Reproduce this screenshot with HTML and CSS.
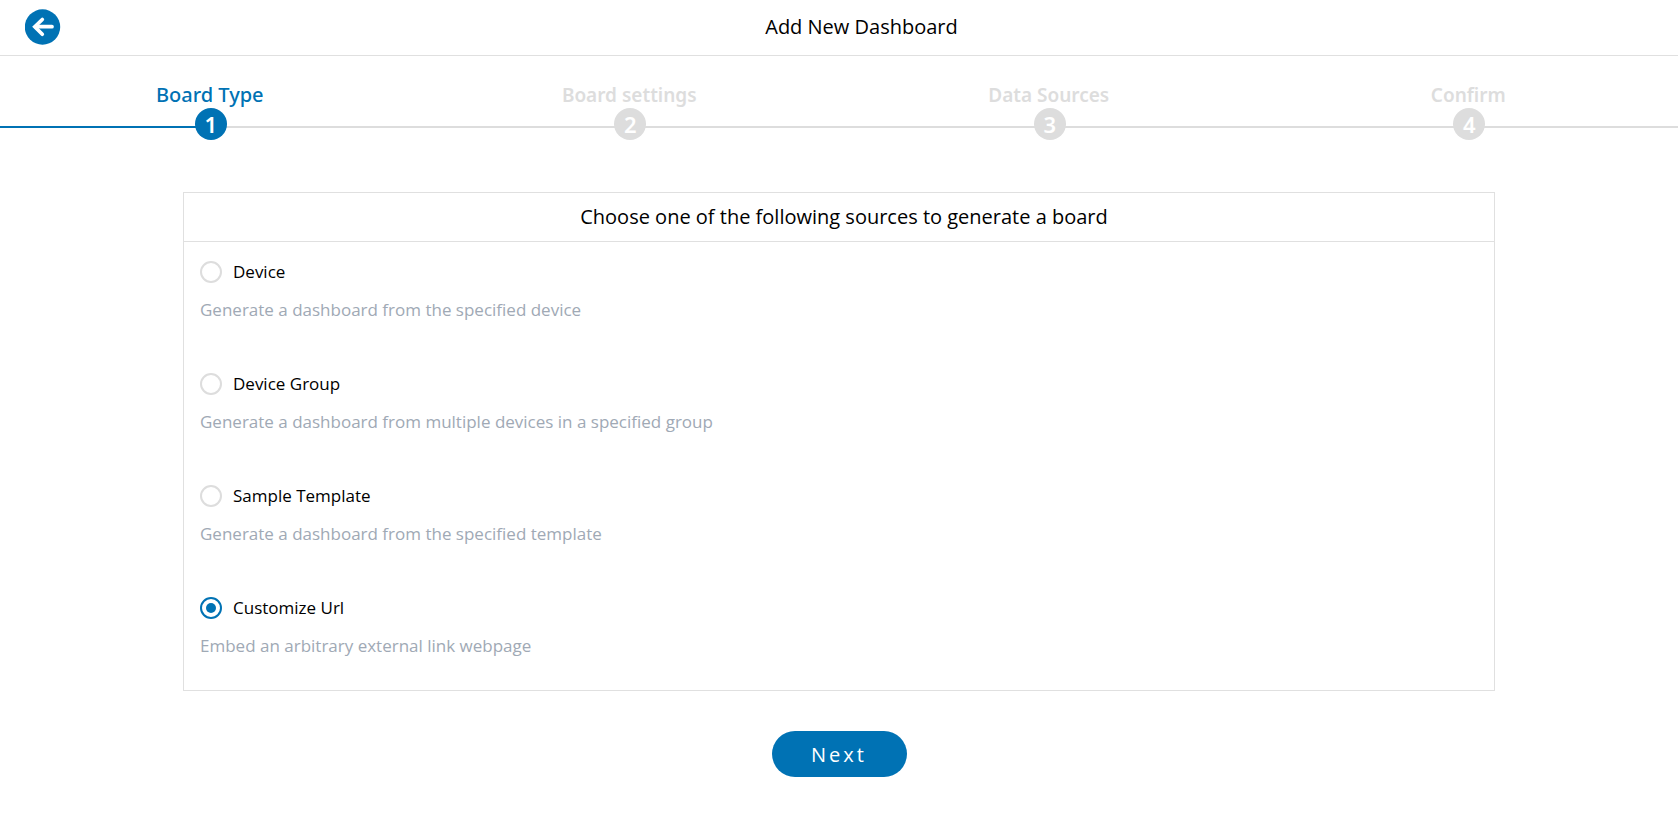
FILE: index.html
```html
<!DOCTYPE html>
<html lang="en">
<head>
<meta charset="utf-8">
<title>Add New Dashboard</title>
<link rel="stylesheet" href="styles.css">
</head>
<body>
<header class="topbar">
  <button class="back" type="button" aria-label="Back">
    <svg viewBox="0 0 36 36" width="36" height="36" aria-hidden="true">
      <circle cx="17.500" cy="18" r="17.700" fill="#0072b4"/>
      <path d="M17.300 10.500L9.800 17.700l7.500 7.500" fill="none" stroke="#fff" stroke-width="3.700" stroke-linecap="round" stroke-linejoin="miter"/>
      <path d="M10.500 17.700H27" fill="none" stroke="#fff" stroke-width="3.700" stroke-linecap="round"/>
    </svg>
  </button>
  <h1 class="topbar-title">Add New Dashboard</h1>
</header>
<main>
  <ol class="steps">
    <li class="step step-active"><span class="step-label">Board Type</span><span class="step-track"><span class="step-number">1</span></span></li>
    <li class="step"><span class="step-label">Board settings</span><span class="step-track"><span class="step-number">2</span></span></li>
    <li class="step"><span class="step-label">Data Sources</span><span class="step-track"><span class="step-number">3</span></span></li>
    <li class="step"><span class="step-label">Confirm</span><span class="step-track"><span class="step-number">4</span></span></li>
  </ol>
  <form class="form">
    <section class="panel">
      <h2 class="panel-title">Choose one of the following sources to generate a board</h2>
      <div class="options">
        <div class="option">
          <label class="choice"><input class="radio" type="radio" name="source">Device</label>
          <p class="hint">Generate a dashboard from the specified device</p>
        </div>
        <div class="option">
          <label class="choice"><input class="radio" type="radio" name="source">Device Group</label>
          <p class="hint">Generate a dashboard from multiple devices in a specified group</p>
        </div>
        <div class="option">
          <label class="choice"><input class="radio" type="radio" name="source">Sample Template</label>
          <p class="hint">Generate a dashboard from the specified template</p>
        </div>
        <div class="option">
          <label class="choice"><input class="radio" type="radio" name="source" checked>Customize Url</label>
          <p class="hint">Embed an arbitrary external link webpage</p>
        </div>
      </div>
    </section>
    <button class="next" type="button">Next</button>
  </form>
</main>
</body>
</html>
```
FILE: styles.css
```css
* {
  box-sizing: border-box;
}

body {
  margin: 0;
  background: #fff;
  color: #000;
  font-family: "Open Sans", "Noto Sans", sans-serif;
  font-size: 17px;
  line-height: 24px;
}

h1, h2, p, ol {
  margin: 0;
  padding: 0;
}

.topbar {
  display: grid;
  grid-template-columns: 36px 1fr;
  align-items: center;
  height: 56px;
  padding: 0 16px 2px 25px;
  border-bottom: 1px solid #e0e0e0;
}

.back {
  display: flex;
  padding: 0;
  border: 0;
  background: none;
}

.topbar-title {
  font-size: 20px;
  font-weight: 400;
  text-align: center;
}

.steps {
  display: flex;
  padding-top: 26px;
  list-style: none;
}

.step {
  flex: 1;
  color: #ddd;
  text-align: center;
}

.step-label {
  display: block;
  height: 26px;
  font-family: "Noto Sans", sans-serif;
  font-size: 19px;
  font-weight: 600;
  line-height: 26px;
}

.step-track {
  display: flex;
  justify-content: center;
  padding-left: 2px;
  background: linear-gradient(#ddd, #ddd) 0 18px / 100% 2px no-repeat;
}

.step-number {
  width: 32px;
  height: 32px;
  border-radius: 50%;
  background: #ddd;
  color: #fff;
  font-family: "Noto Sans", sans-serif;
  font-size: 22px;
  font-weight: 600;
  line-height: 32px;
}

.step-active {
  color: #0072b4;
}

.step-active .step-label {
  font-size: 20px;
  font-weight: 500;
}

.step-active .step-track {
  background-image: linear-gradient(90deg, #0072b4 50%, #ddd 50%);
}

.step-active .step-number {
  background: #0072b4;
}

.form {
  display: flex;
  flex-direction: column;
  align-items: center;
  gap: 40px;
  padding: 52px 183px 40px;
}

.panel {
  width: 100%;
  border: 1px solid #e0e0e0;
}

.panel-title {
  padding: 10px 0 10px 10px;
  border-bottom: 1px solid #e0e0e0;
  font-size: 20px;
  font-weight: 400;
  line-height: 28px;
  text-align: center;
}

.options {
  display: grid;
  gap: 48px;
  padding: 16px 16px 32px;
}

.option {
  display: grid;
  gap: 12px;
}

.choice {
  display: flex;
  align-items: center;
  gap: 11px;
  height: 28px;
}

.hint {
  color: #a0a9b5;
}

.radio {
  display: grid;
  place-content: center;
  width: 22px;
  height: 22px;
  margin: 0;
  border: 2px solid #ddd;
  border-radius: 50%;
  appearance: none;
}

.radio:checked {
  border-color: #0072b4;
}

.radio:checked::before {
  width: 10px;
  height: 10px;
  border-radius: 50%;
  background: #0072b4;
  content: "";
}

.next {
  width: 135px;
  height: 46px;
  padding: 2px 0 0;
  border: 0;
  border-radius: 23px;
  background: #0072b4;
  color: #fff;
  font: inherit;
  font-size: 20px;
  letter-spacing: 3px;
}
```
